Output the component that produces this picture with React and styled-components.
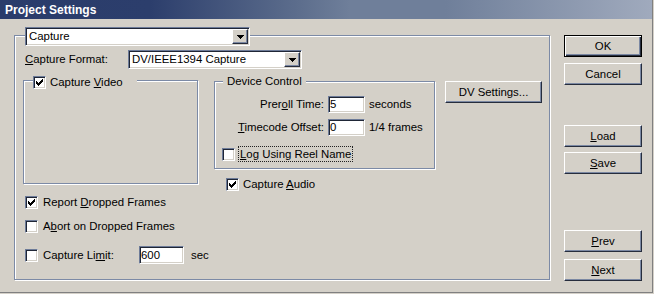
import styled, { createGlobalStyle, css } from 'styled-components';

const GlobalStyle = createGlobalStyle`
  html, body {
    margin: 0;
    padding: 0;
    background: #d4d0c8;
  }
  body {
    font-family: "Liberation Sans", Arial, sans-serif;
    font-size: 11.4px;
    line-height: 13px;
    color: #000;
  }
`;

const sunken = css`
  box-sizing: border-box;
  background: #fff;
  border: 1px solid;
  border-color: #6d7b98 #fff #fff #6d7b98;
  box-shadow: inset 1px 1px 0 #1f2636, inset -1px -1px 0 #d4d0c8;
`;

const raised = css`
  box-sizing: border-box;
  background: #d4d0c8;
  border: 1px solid;
  border-color: #fff #262d3d #262d3d #fff;
  box-shadow: inset -1px -1px 0 #7b88a3;
`;

const etched = css`
  margin: 0;
  min-width: 0;
  box-sizing: border-box;
  border: 1px solid #7c8aa6;
  box-shadow: inset 1px 1px 0 #fff, 1px 1px 0 #fff;
`;

const Window = styled.div`
  width: 653px;
  height: 293px;
  box-sizing: border-box;
  border-right: 1px solid #808080;
  border-bottom: 1px solid #808080;
  display: flex;
  flex-direction: column;
`;

const TitleBar = styled.div`
  flex: none;
  height: 19px;
  padding-left: 5px;
  background: linear-gradient(
    90deg,
    #2a3c6b 0px,
    #2c3e6c 150px,
    #5d6e8d 300px,
    #6f7f9a 350px,
    #6f7f9a 445px,
    #a0aabd 652px
  );
  color: #fff;
  font-weight: bold;
  font-size: 12px;
  line-height: 20px;
  white-space: nowrap;
`;

const Body = styled.div`
  display: flex;
  align-items: flex-start;
  padding: 8px 0 0 14px;
`;

const MainGroup = styled.fieldset`
  ${etched}
  width: 536px;
  padding: 6px 7px 15px 8px;
`;

const MainLegend = styled.legend`
  padding: 0;
  margin-left: 2px;
  height: 17px;
  display: flex;
  align-items: flex-start;
`;

const SelectBox = styled.div`
  ${sunken}
  flex: none;
  width: ${p => p.$w}px;
  height: 19px;
  padding: 1px;
  display: flex;
  align-items: center;
`;

const SelectValue = styled.span`
  flex: 1;
  padding-left: 2px;
  line-height: 15px;
  white-space: nowrap;
`;

const ArrowButton = styled.span`
  ${raised}
  width: 16px;
  height: 15px;
  display: flex;
  align-items: center;
  justify-content: center;
`;

const FormatRow = styled.div`
  display: flex;
  align-items: center;
  margin-left: 2px;
  height: 19px;
`;

const Label = styled.span`
  flex: none;
  width: ${p => p.$w}px;
  white-space: nowrap;
`;

const Key = styled.span`
  text-decoration: underline;
`;

const Columns = styled.div`
  display: flex;
  align-items: flex-start;
  gap: 16px;
  margin-top: 6px;
`;

const VideoGroup = styled.fieldset`
  ${etched}
  width: 175px;
  height: 108px;
  margin-top: 1px;
  padding: 0 0 0 9px;
`;

const CheckLegend = styled.legend`
  padding: 0 14px 0 0;
  height: 9px;
  background: #d4d0c8;
  display: flex;
  align-items: flex-start;
  gap: 4px;
  white-space: nowrap;
`;

const RightCol = styled.div`
  display: flex;
  flex-direction: column;
`;

const DeviceRow = styled.div`
  display: flex;
  align-items: flex-start;
  gap: 10px;
`;

const DeviceGroup = styled.fieldset`
  ${etched}
  width: 221px;
  padding: 8px 0 6px 7px;
`;

const TextLegend = styled.legend`
  margin-left: 1px;
  padding: 0 4px;
  line-height: 13px;
  background: #d4d0c8;
  white-space: nowrap;
`;

const FieldGrid = styled.div`
  display: grid;
  grid-template-columns: 102px 37px auto;
  column-gap: 4px;
  row-gap: 6px;
  align-items: center;
`;

const FieldLabel = styled.span`
  text-align: right;
  white-space: nowrap;
`;

const TextField = styled.span`
  ${sunken}
  display: block;
  flex: none;
  width: ${p => p.$w}px;
  height: ${p => p.$h}px;
  padding-left: 1px;
  line-height: ${p => p.$h - 2}px;
`;

const CheckRow = styled.div`
  display: flex;
  align-items: center;
  gap: ${p => p.$gap ?? 4}px;
  height: ${p => p.$h || 13}px;
  margin: ${p => p.$mt || 0}px 0 0 ${p => p.$ml || 0}px;
  white-space: nowrap;
`;

const FocusText = styled.span`
  border: 1px dotted #222;
  padding: 0 1px;
  line-height: 14px;
`;

const CheckBox = styled.span`
  ${sunken}
  flex: none;
  width: 13px;
  height: 13px;
  display: flex;
  align-items: center;
  justify-content: center;
`;

const Unit = styled.span`
  margin-left: ${p => p.$ml || 0}px;
`;

const ButtonCol = styled.div`
  display: flex;
  flex-direction: column;
  width: 78px;
  margin-left: 14px;
`;

const Button = styled.button`
  ${raised}
  width: ${p => p.$w || 78}px;
  height: 22px;
  margin-top: ${p => p.$mt || 0}px;
  padding: 0;
  font: inherit;
  color: #000;
  flex: none;
  ${p =>
    p.$default &&
    css`
      border-color: #000;
      box-shadow: inset 1px 1px 0 #fff, inset -1px -1px 0 #262d3d,
        inset -2px -2px 0 #7b88a3;
    `}
`;

function Check({ checked }) {
  return (
    <CheckBox>
      {checked && (
        <svg width="7" height="7" viewBox="0 0 7 7" shapeRendering="crispEdges">
          <path
            fill="#000"
            d="M0 2h1v3H0z M1 3h1v3H1z M2 4h1v3H2z M3 3h1v3H3z M4 2h1v3H4z M5 1h1v3H5z M6 0h1v3H6z"
          />
        </svg>
      )}
    </CheckBox>
  );
}

function Select({ width, value }) {
  return (
    <SelectBox $w={width}>
      <SelectValue>{value}</SelectValue>
      <ArrowButton>
        <svg width="7" height="4" viewBox="0 0 7 4" shapeRendering="crispEdges">
          <path fill="#000" d="M0 0h7v1H0z M1 1h5v1H1z M2 2h3v1H2z M3 3h1v1H3z" />
        </svg>
      </ArrowButton>
    </SelectBox>
  );
}

export default function App() {
  return (
    <>
      <GlobalStyle />
      <Window>
        <TitleBar>Project Settings</TitleBar>
        <Body>
          <MainGroup>
            <MainLegend>
              <Select width={225} value="Capture" />
            </MainLegend>

            <FormatRow>
              <Label $w={103}>
                <Key>C</Key>apture Format:
              </Label>
              <Select width={174} value="DV/IEEE1394 Capture" />
            </FormatRow>

            <Columns>
              <VideoGroup>
                <CheckLegend>
                  <Check checked />
                  <span>
                    Capture <Key>V</Key>ideo
                  </span>
                </CheckLegend>
              </VideoGroup>

              <RightCol>
                <DeviceRow>
                  <DeviceGroup>
                    <TextLegend>Device Control</TextLegend>
                    <FieldGrid>
                      <FieldLabel>
                        Prer<Key>o</Key>ll Time:
                      </FieldLabel>
                      <TextField $w={37} $h={17}>5</TextField>
                      <span>seconds</span>
                      <FieldLabel>
                        <Key>T</Key>imecode Offset:
                      </FieldLabel>
                      <TextField $w={37} $h={17}>0</TextField>
                      <span>1/4 frames</span>
                    </FieldGrid>
                    <CheckRow $mt={10} $h={16} $gap={3}>
                      <Check />
                      <FocusText>
                        <Key>L</Key>og Using Reel Name
                      </FocusText>
                    </CheckRow>
                  </DeviceGroup>
                  <Button $w={97} $mt={6}>
                    DV Settings...
                  </Button>
                </DeviceRow>
                <CheckRow $mt={9} $ml={12}>
                  <Check checked />
                  <span>
                    Capture <Key>A</Key>udio
                  </span>
                </CheckRow>
              </RightCol>
            </Columns>

            <CheckRow $mt={5} $ml={2} $gap={5}>
              <Check checked />
              <span>
                Report <Key>D</Key>ropped Frames
              </span>
            </CheckRow>
            <CheckRow $mt={11} $ml={2} $gap={5}>
              <Check />
              <span>
                A<Key>b</Key>ort on Dropped Frames
              </span>
            </CheckRow>
            <CheckRow $mt={13} $ml={2} $gap={5} $h={18}>
              <Check />
              <Label $w={91}>
                Capture Li<Key>m</Key>it:
              </Label>
              <TextField $w={45} $h={18}>600</TextField>
              <Unit $ml={2}>sec</Unit>
            </CheckRow>
          </MainGroup>

          <ButtonCol>
            <Button $default $mt={8}>OK</Button>
            <Button $mt={6}>Cancel</Button>
            <Button $mt={40}>
              <Key>L</Key>oad
            </Button>
            <Button $mt={5}>
              <Key>S</Key>ave
            </Button>
            <Button $mt={56}>
              <Key>P</Key>rev
            </Button>
            <Button $mt={7}>
              <Key>N</Key>ext
            </Button>
          </ButtonCol>
        </Body>
      </Window>
    </>
  );
}
